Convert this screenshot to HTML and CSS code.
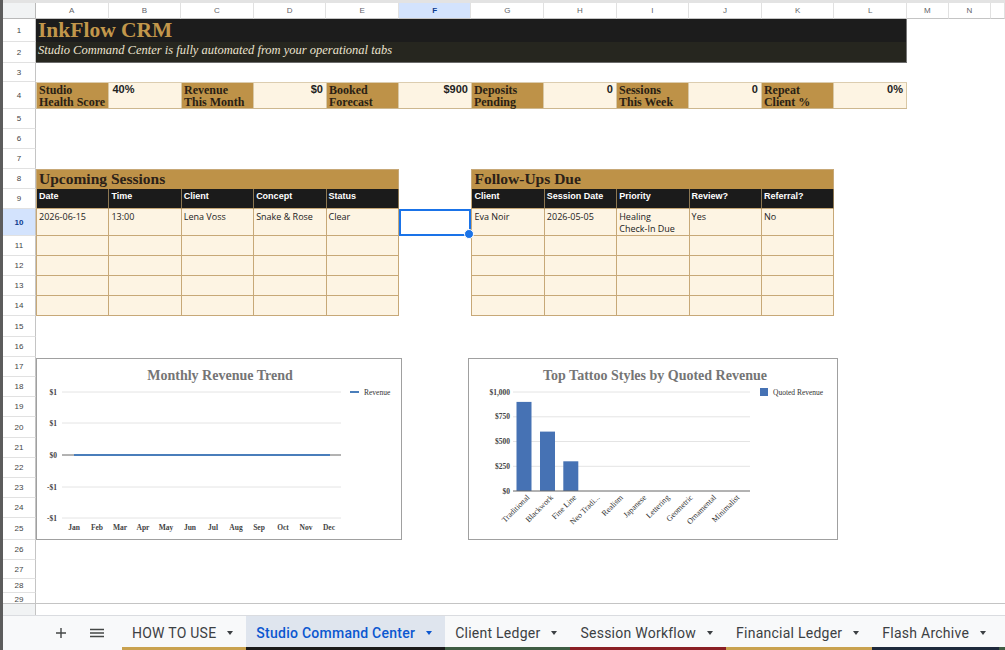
FILE: index.html
```html
<!DOCTYPE html>
<html lang="en">
<head>
  <meta charset="UTF-8" />
  <title>InkFlow CRM - Studio Command Center</title>
  <link rel="stylesheet" href="styles.css">
</head>
<body>
  <div class="app">
    <div class="sheet">
      <div class="corner"></div>
      <div class="ch">A</div>
      <div class="ch">B</div>
      <div class="ch">C</div>
      <div class="ch">D</div>
      <div class="ch">E</div>
      <div class="ch on">F</div>
      <div class="ch">G</div>
      <div class="ch">H</div>
      <div class="ch">I</div>
      <div class="ch">J</div>
      <div class="ch">K</div>
      <div class="ch">L</div>
      <div class="ch">M</div>
      <div class="ch">N</div>
      <div class="ch"></div>

      <div class="rh">1</div>
      <div class="rh">2</div>
      <div class="rh">3</div>
      <div class="rh">4</div>
      <div class="rh">5</div>
      <div class="rh">6</div>
      <div class="rh">7</div>
      <div class="rh">8</div>
      <div class="rh">9</div>
      <div class="rh on">10</div>
      <div class="rh">11</div>
      <div class="rh">12</div>
      <div class="rh">13</div>
      <div class="rh">14</div>
      <div class="rh">15</div>
      <div class="rh">16</div>
      <div class="rh">17</div>
      <div class="rh">18</div>
      <div class="rh">19</div>
      <div class="rh">20</div>
      <div class="rh">21</div>
      <div class="rh">22</div>
      <div class="rh">23</div>
      <div class="rh">24</div>
      <div class="rh">25</div>
      <div class="rh">26</div>
      <div class="rh">27</div>
      <div class="rh">28</div>
      <div class="rh cut">29</div>

      <div class="title">InkFlow CRM</div>
      <div class="subtitle">Studio Command Center is fully automated from your operational tabs</div>

      <div class="kpis">
        <div class="kpi-l">Studio<br>Health Score</div>
        <div class="kpi-v left">40%</div>
        <div class="kpi-l">Revenue<br>This Month</div>
        <div class="kpi-v">$0</div>
        <div class="kpi-l">Booked<br>Forecast</div>
        <div class="kpi-v">$900</div>
        <div class="kpi-l">Deposits<br>Pending</div>
        <div class="kpi-v">0</div>
        <div class="kpi-l">Sessions<br>This Week</div>
        <div class="kpi-v">0</div>
        <div class="kpi-l">Repeat<br>Client %</div>
        <div class="kpi-v">0%</div>
      </div>

      <div class="tbl sessions">
        <div class="tt">Upcoming Sessions</div>
        <div class="th">Date</div>
        <div class="th">Time</div>
        <div class="th">Client</div>
        <div class="th">Concept</div>
        <div class="th">Status</div>
        <div class="td">2026-06-15</div>
        <div class="td">13:00</div>
        <div class="td">Lena Voss</div>
        <div class="td">Snake &amp; Rose</div>
        <div class="td">Clear</div>
        <div class="td"></div><div class="td"></div><div class="td"></div><div class="td"></div><div class="td"></div>
        <div class="td"></div><div class="td"></div><div class="td"></div><div class="td"></div><div class="td"></div>
        <div class="td"></div><div class="td"></div><div class="td"></div><div class="td"></div><div class="td"></div>
        <div class="td"></div><div class="td"></div><div class="td"></div><div class="td"></div><div class="td"></div>
      </div>

      <div class="tbl followups">
        <div class="tt">Follow-Ups Due</div>
        <div class="th">Client</div>
        <div class="th">Session Date</div>
        <div class="th">Priority</div>
        <div class="th">Review?</div>
        <div class="th">Referral?</div>
        <div class="td">Eva Noir</div>
        <div class="td">2026-05-05</div>
        <div class="td">Healing<br>Check-In Due</div>
        <div class="td">Yes</div>
        <div class="td">No</div>
        <div class="td"></div><div class="td"></div><div class="td"></div><div class="td"></div><div class="td"></div>
        <div class="td"></div><div class="td"></div><div class="td"></div><div class="td"></div><div class="td"></div>
        <div class="td"></div><div class="td"></div><div class="td"></div><div class="td"></div><div class="td"></div>
        <div class="td"></div><div class="td"></div><div class="td"></div><div class="td"></div><div class="td"></div>
      </div>

      <div class="sel"></div>

      <!-- charts float over the grid -->
      <div class="chart chart-rev">
        <svg width="366" height="182">
          <text class="c-title" x="184" y="22">Monthly Revenue Trend</text>
          <g class="grid">
            <line x1="26" y1="34" x2="305" y2="34" />
            <line x1="26" y1="65" x2="305" y2="65" />
            <line x1="26" y1="129" x2="305" y2="129" />
            <line x1="26" y1="160" x2="305" y2="160" />
          </g>
          <line class="axis" x1="26" y1="97" x2="305" y2="97" />
          <line class="series" x1="38" y1="97" x2="294" y2="97" />
          <g class="ylab">
            <text x="21" y="37">$1</text>
            <text x="21" y="68">$1</text>
            <text x="21" y="100">$0</text>
            <text x="21" y="132">-$1</text>
            <text x="21" y="163">-$1</text>
          </g>
          <g class="xlab">
            <text x="38" y="172">Jan</text>
            <text x="61" y="172">Feb</text>
            <text x="84" y="172">Mar</text>
            <text x="107" y="172">Apr</text>
            <text x="130" y="172">May</text>
            <text x="154" y="172">Jun</text>
            <text x="177" y="172">Jul</text>
            <text x="200" y="172">Aug</text>
            <text x="223" y="172">Sep</text>
            <text x="247" y="172">Oct</text>
            <text x="270" y="172">Nov</text>
            <text x="293" y="172">Dec</text>
          </g>
          <line class="series" x1="314" y1="34" x2="323" y2="34" />
          <text class="legend" x="328" y="36.5">Revenue</text>
        </svg>
      </div>

      <div class="chart chart-sty">
        <svg width="370" height="182">
          <text class="c-title" x="187" y="22">Top Tattoo Styles by Quoted Revenue</text>
          <g class="grid">
            <line x1="45" y1="34" x2="282" y2="34" />
            <line x1="45" y1="58.8" x2="282" y2="58.8" />
            <line x1="45" y1="83.5" x2="282" y2="83.5" />
            <line x1="45" y1="108.3" x2="282" y2="108.3" />
          </g>
          <g class="bars">
            <rect x="48.5" y="43.9" width="15" height="89.1" />
            <rect x="72" y="73.6" width="15" height="59.4" />
            <rect x="95.3" y="103.3" width="15" height="29.7" />
          </g>
          <line class="axis" x1="45" y1="133" x2="282" y2="133" />
          <g class="ylab">
            <text x="42" y="36.5">$1,000</text>
            <text x="42" y="61.3">$750</text>
            <text x="42" y="86">$500</text>
            <text x="42" y="110.8">$250</text>
            <text x="42" y="135.5">$0</text>
          </g>
          <g class="clab">
            <text transform="translate(62 140) rotate(-45)">Traditional</text>
            <text transform="translate(85.5 140) rotate(-45)">Blackwork</text>
            <text transform="translate(108.8 140) rotate(-45)">Fine Line</text>
            <text transform="translate(132.1 140) rotate(-45)">Neo Tradi...</text>
            <text transform="translate(155.4 140) rotate(-45)">Realism</text>
            <text transform="translate(178.7 140) rotate(-45)">Japanese</text>
            <text transform="translate(202 140) rotate(-45)">Lettering</text>
            <text transform="translate(225.3 140) rotate(-45)">Geometric</text>
            <text transform="translate(248.6 140) rotate(-45)">Ornamental</text>
            <text transform="translate(271.9 140) rotate(-45)">Minimalist</text>
          </g>
          <rect class="bars" x="292" y="30" width="8" height="8" />
          <text class="legend" x="305" y="36.5">Quoted Revenue</text>
        </svg>
      </div>
    </div>

    <div class="hscroll"><div class="hscroll-rh"></div></div>

    <div class="tabs">
      <div class="tbtn">
        <svg width="10" height="10"><path d="M5 0v10M0 5h10" stroke="#444746" stroke-width="1.4" /></svg>
      </div>
      <div class="tbtn">
        <svg width="14" height="10"><path d="M0 1.5h14M0 5h14M0 8.5h14" stroke="#444746" stroke-width="1.4" /></svg>
      </div>
      <div class="tab gold first">HOW TO USE <span class="caret"></span></div>
      <div class="tab on">Studio Command Center <span class="caret"></span></div>
      <div class="tab green">Client Ledger <span class="caret"></span></div>
      <div class="tab red">Session Workflow <span class="caret"></span></div>
      <div class="tab gold">Financial Ledger <span class="caret"></span></div>
      <div class="tab navy">Flash Archive <span class="caret"></span></div>
      <div class="tab green"></div>
    </div>
  </div>
</body>
</html>
```

FILE: styles.css
```css
* {
  box-sizing: border-box;
}
body {
  margin: 0;
  font-family: "Liberation Sans", Arial, sans-serif;
  background-color: #fff;
  color: #222;
}
.app {
  width: 1005px;
  height: 650px;
  border-left: 3px solid #5c5c5c;
  display: flex;
  flex-direction: column;
  overflow: hidden;
}
.sheet {
  position: relative;
  height: 603px;
  flex: none;
  border-top: 3px solid #e3e3e3;
  display: grid;
  grid-template-columns: 33px repeat(12, 72.583px) 42px 42px 1fr;
  grid-template-rows: 16px 23px 21px 19px 27px 20px 20px 20px 20px 20px 27px 20px 20px 20px 20px 21px 20px 20px 20px 20px 21px 20px 20px 20px 20px 22px 20px 19px 14px 10px;
  overflow: hidden;
}
.corner {
  grid-row: 1;
  grid-column: 1;
  background-color: #f1f3f4;
  border-right: 1px solid #b9b9b9;
  border-bottom: 1px solid #b9b9b9;
}
.ch {
  grid-row: 1;
  display: flex;
  align-items: center;
  justify-content: center;
  font-size: 8px;
  color: #5f6368;
  border-right: 1px solid #e1e1e1;
  border-bottom: 1px solid #c4c4c4;
}
.ch.on {
  background-color: #d3e3fd;
  color: #0b3a8f;
  font-weight: bold;
}
.rh {
  grid-column: 1;
  display: flex;
  align-items: center;
  justify-content: center;
  font-size: 8px;
  color: #444;
  border-bottom: 1px solid #e1e1e1;
  border-right: 1px solid #c4c4c4;
  overflow: hidden;
}
.rh.on {
  background-color: #d3e3fd;
  color: #0b3a8f;
  font-weight: bold;
}
.rh.cut {
  align-items: flex-start;
  line-height: 12px;
  padding-top: 1px;
  border-bottom: none;
}

/* title band */
.title {
  grid-column: 2 / 14;
  grid-row: 2;
  background-color: #1c1c1c;
  color: #c2974b;
  font: bold 21.5px/23px "Liberation Serif", serif;
  padding-left: 2px;
  border-right: 1px solid #777;
}
.subtitle {
  grid-column: 2 / 14;
  grid-row: 3;
  background-color: #26261f;
  color: #ebe3cf;
  font: italic 12.5px/14px "Liberation Serif", serif;
  padding: 1px 0 0 2px;
  border-right: 1px solid #777;
  border-bottom: 1px solid #6b6b6b;
}

/* kpi strip */
.kpis {
  grid-column: 2 / 14;
  grid-row: 5;
  display: grid;
  grid-template-columns: repeat(12, 1fr);
  border-top: 1px solid #dccdb0;
  border-bottom: 1px solid #cdb78f;
  border-left: 1px solid #d9c8a5;
}
.kpi-l {
  background-color: #be9248;
  color: #2a1f14;
  font: bold 12px/12px "Liberation Serif", serif;
  padding: 1px 2px 0;
  border-right: 1px solid #d9c8a5;
}
.kpi-v {
  background-color: #fdf4e3;
  font-weight: bold;
  font-size: 11px;
  line-height: 13px;
  text-align: right;
  padding: 0 3px;
  border-right: 1px solid #d9c8a5;
}
.kpi-v.left {
  text-align: left;
}

/* tables */
.tbl {
  grid-row: 9 / 16;
  display: grid;
  grid-template-columns: repeat(5, 1fr);
  grid-template-rows: 19px 20px 27px 20px 20px 20px 20px;
  border-top: 1px solid #c7a877;
  border-left: 1px solid #c7a877;
}
.sessions {
  grid-column: 2 / 7;
}
.followups {
  grid-column: 8 / 13;
}
.tt {
  grid-column: 1 / -1;
  background-color: #be9248;
  color: #2b2118;
  font: bold 15.5px/17px "Liberation Serif", serif;
  padding-left: 2px;
  border-right: 1px solid #c7a877;
}
.th {
  background-color: #1b1b1b;
  color: #fff;
  font-weight: bold;
  font-size: 9px;
  line-height: 11px;
  padding: 2px 2px 0;
  border-right: 1px solid #8c7752;
  border-bottom: 1px solid #c7a877;
}
.td {
  background-color: #fdf4e3;
  font: 9px/12px "Open Sans", sans-serif;
  color: #222;
  padding: 2px 2px 0;
  border-right: 1px solid #c7a877;
  border-bottom: 1px solid #c7a877;
}
.sel {
  grid-column: 7;
  grid-row: 11;
  position: relative;
  z-index: 2;
  border: 2px solid #1a73e8;
}
.sel::after {
  content: "";
  position: absolute;
  right: -5px;
  bottom: -5px;
  width: 8px;
  height: 8px;
  border-radius: 50%;
  background-color: #1a73e8;
  border: 1px solid #fff;
}

/* charts */
.chart {
  position: absolute;
  top: 355px;
  height: 182px;
  background-color: #fff;
  border: 1px solid #a0a0a0;
  z-index: 3;
}
.chart svg {
  display: block;
  margin: -1px 0 0 -1px;
  font-family: "Liberation Serif", serif;
}
.chart-rev {
  left: 33px;
  width: 366px;
}
.chart-sty {
  left: 465px;
  width: 370px;
}
.c-title {
  font-size: 14px;
  font-weight: bold;
  fill: #757575;
  text-anchor: middle;
}
.grid line {
  stroke: #e4e4e4;
  stroke-width: 1;
}
.axis {
  stroke: #666;
  stroke-width: 1;
}
.series {
  stroke: #4a7ebb;
  stroke-width: 2;
}
.ylab text {
  font-size: 7.5px;
  font-weight: bold;
  fill: #444;
  text-anchor: end;
}
.xlab text {
  font-size: 7.5px;
  font-weight: bold;
  fill: #444;
  text-anchor: middle;
}
.clab text {
  font-size: 8px;
  fill: #333;
  text-anchor: end;
}
.bars,
.bars rect {
  fill: #4672b4;
}
.legend {
  font-size: 7.5px;
  fill: #333;
}

/* bottom */
.hscroll {
  height: 12px;
  flex: none;
  display: flex;
  border-top: 1px solid #c4c4c4;
}
.hscroll-rh {
  width: 33px;
  background-color: #f1f3f4;
  border-right: 1px solid #c4c4c4;
}
.tabs {
  height: 35px;
  flex: none;
  display: flex;
  background-color: #f8f9fa;
  border-top: 1px solid #dadce0;
  padding-left: 40px;
}
.tbtn {
  flex: none;
  width: 36px;
  display: flex;
  align-items: center;
  justify-content: center;
}
.tab {
  flex: none;
  display: flex;
  align-items: center;
  gap: 11px;
  padding: 2px 13px 0 10px;
  font-family: Roboto, sans-serif;
  font-size: 14px;
  letter-spacing: 0.25px;
  color: #3c4043;
  white-space: nowrap;
  border-bottom: 3px solid #1b1b1b;
}
.tab.first {
  margin-left: 7px;
}
.tab.on {
  background-color: #dfe5ee;
  color: #0b57d0;
  font-weight: 500;
}
.tab.gold {
  border-bottom-color: #c9a24f;
}
.tab.green {
  border-bottom-color: #3f5c43;
}
.tab.red {
  border-bottom-color: #8a1f24;
}
.tab.navy {
  border-bottom-color: #1f2a3c;
}
.caret {
  width: 0;
  height: 0;
  border-left: 3.5px solid transparent;
  border-right: 3.5px solid transparent;
  border-top: 4px solid currentColor;
}
```
